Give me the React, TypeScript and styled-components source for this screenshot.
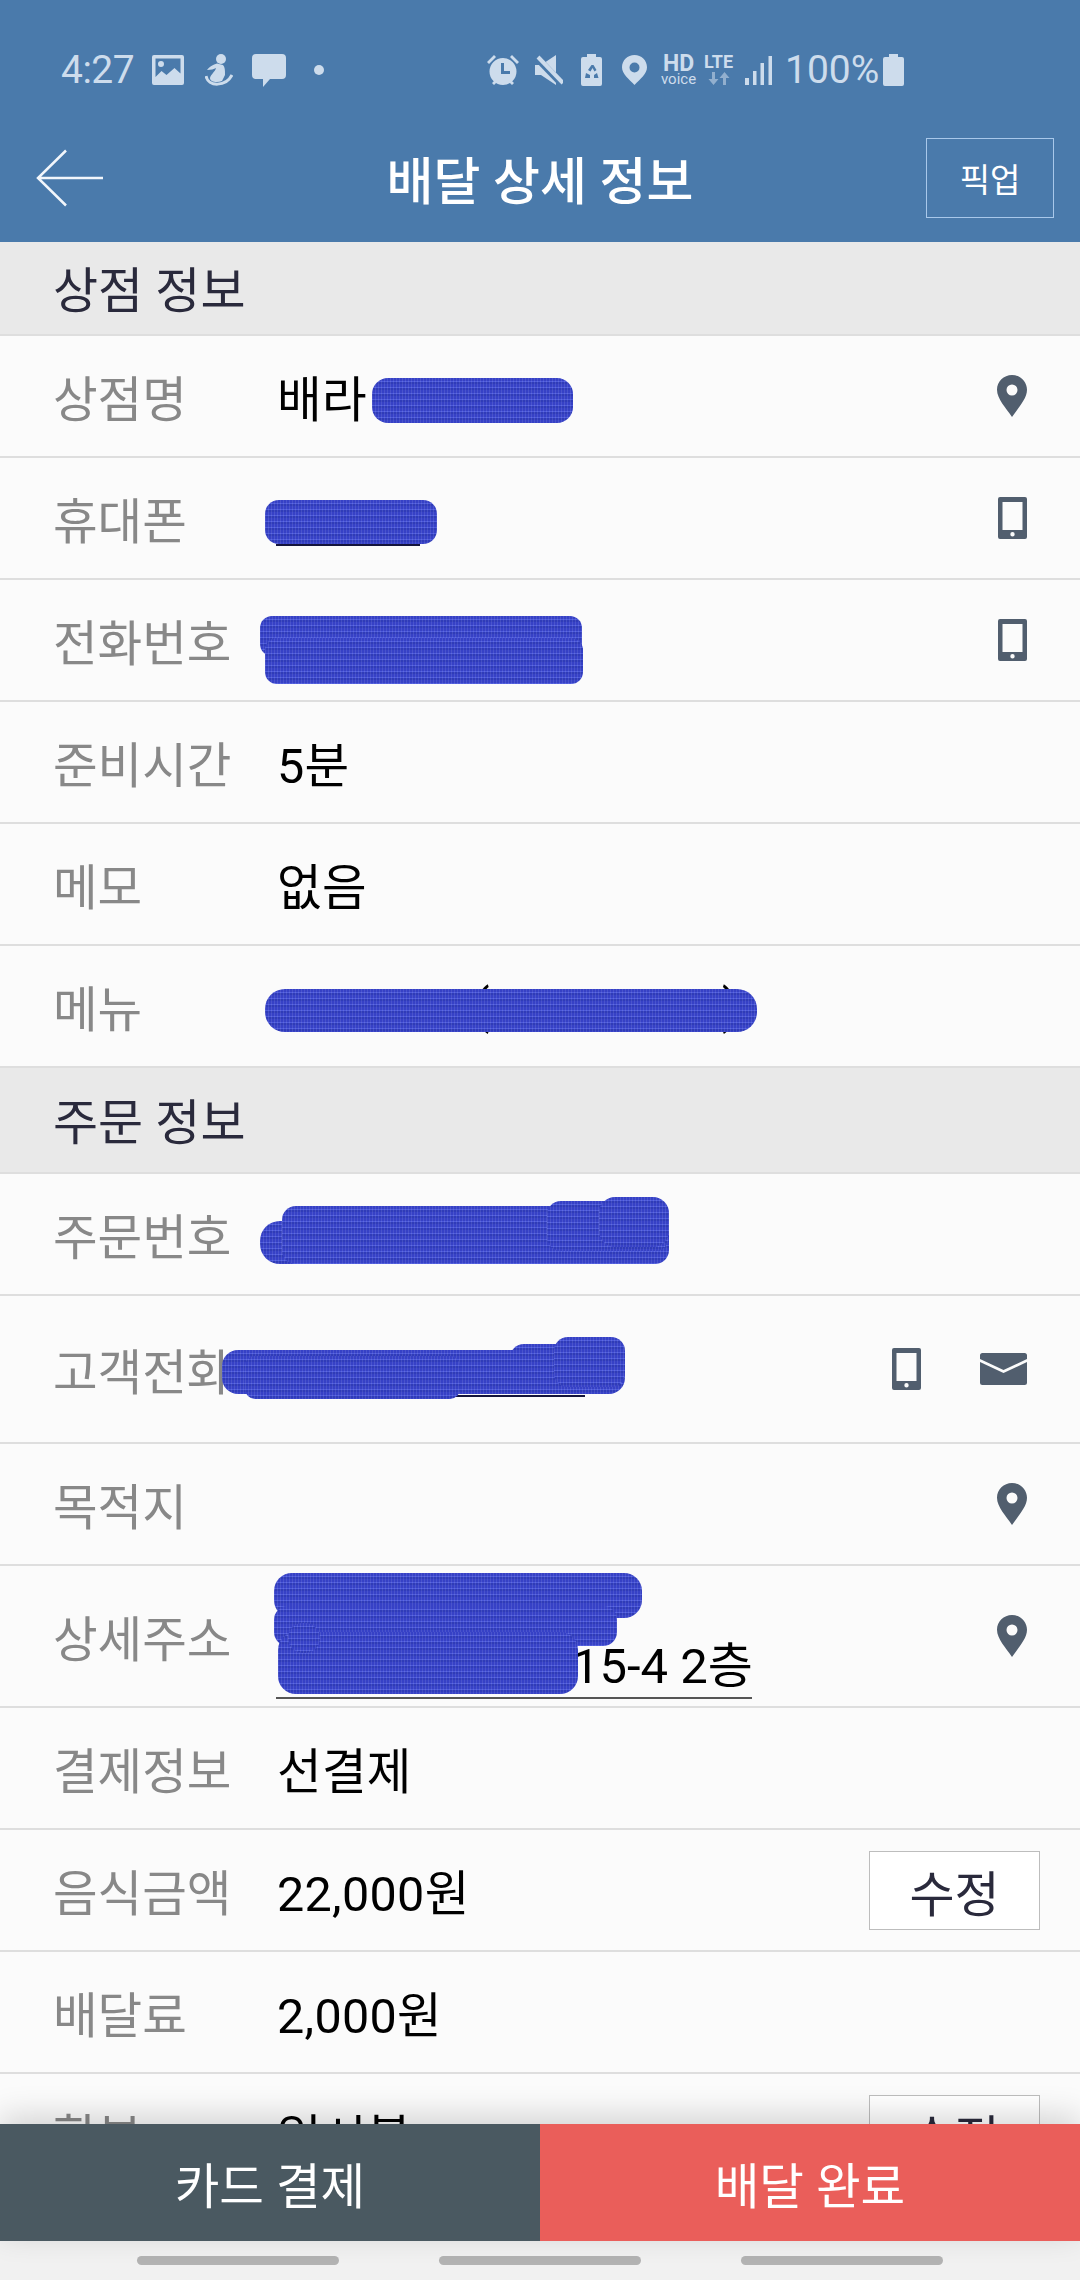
import React from 'react'
import styled, {createGlobalStyle} from 'styled-components'

const Global = createGlobalStyle`
  html, body {
    margin: 0;
    padding: 0;
    width: 1080px;
    height: 2280px;
    overflow: hidden;
    background: #fbfbfb;
    font-family: Roboto, "Noto Sans CJK KR", sans-serif;
  }
`
const Page = styled.div`
  display: flex;
  flex-direction: column;
  width: 1080px;
  height: 2280px;
`
const Header = styled.header`
  flex: 0 0 242px;
  background: #4a7aab;
  display: flex;
  flex-direction: column;
`
const StatusBar = styled.div`
  display: flex;
  align-items: center;
  height: 34px;
  margin: 53px 0 51px;
  padding-left: 61px;
  color: #cddcec;
`
const Clock = styled.span`
  font-size: 39px;
  width: 91px;
  letter-spacing: -.5px;
`
const Glyph = styled.svg<{$ml?: number}>`
  flex: none;
  margin-left: ${p => p.$ml ?? 0}px;
  fill: #cddcec;
`
const ArrowGlyph = styled(Glyph)`
  opacity: .55;
  margin-top: 2px;
`
const NetStack = styled.div<{$ml: number; $w: number}>`
  display: flex;
  flex-direction: column;
  align-items: center;
  flex: none;
  width: ${p => p.$w}px;
  margin-left: ${p => p.$ml}px;
`
const NetBig = styled.span<{$size: number}>`
  font-size: ${p => p.$size}px;
  font-weight: 700;
  line-height: ${p => p.$size * .8}px;
`
const NetSmall = styled.span`
  font-size: 15px;
  line-height: 12px;
`
const Percent = styled.span`
  flex: none;
  margin-left: 13px;
  width: 98px;
  font-size: 39px;
`
const Toolbar = styled.div`
  display: grid;
  grid-template-columns: 1fr auto 1fr;
  align-items: center;
  height: 80px;
  padding: 0 26px;
`
const BackSlot = styled.div`
  display: flex;
  padding-left: 10px;
`
const Title = styled.h1`
  margin: 0;
  font-size: 51px;
  font-weight: 500;
  color: #fff;
`
const PickButton = styled.div`
  justify-self: end;
  box-sizing: border-box;
  width: 128px;
  height: 80px;
  display: flex;
  align-items: center;
  justify-content: center;
  border: 1.5px solid #a9c8ea;
  color: #fff;
  font-size: 33px;
`
const Scroll = styled.main`
  flex: 0 0 1882px;
  overflow: hidden;
`
const SectionHead = styled.div<{$h: number}>`
  box-sizing: border-box;
  height: ${p => p.$h}px;
  display: flex;
  align-items: center;
  padding: 0 0 4px 53px;
  background: #e9e9e9;
  border-bottom: 2px solid #dedede;
  color: #2a2a3c;
  font-size: 49px;
`
const Row = styled.div<{$h?: number}>`
  position: relative;
  box-sizing: border-box;
  height: ${p => p.$h ?? 122}px;
  display: flex;
  align-items: center;
  padding: 0 53px 0 53px;
  border-bottom: 2px solid #dedede;
`
const Label = styled.span`
  flex: 0 0 224px;
  color: #888;
  font-size: 48.500px;
`
const Value = styled.span`
  flex: 1;
  display: flex;
  align-items: center;
  color: #000;
  font-size: 48.500px;
  letter-spacing: .3px;
`
const Paren = styled.span<{$ml: number}>`
  margin-left: ${p => p.$ml}px;
`
const AddressLine = styled.span`
  position: absolute;
  left: 276px;
  top: 71px;
  width: 476px;
  box-sizing: border-box;
  padding-left: 296px;
  border-bottom: 2px solid #555;
  color: #000;
  font-size: 49px;
  line-height: 60px;
  white-space: nowrap;
`
const Actions = styled.div`
  display: flex;
  align-items: center;
  gap: 59px;
`
const EditButton = styled.div`
  box-sizing: border-box;
  width: 171px;
  height: 79px;
  margin-right: -13px;
  display: flex;
  align-items: center;
  justify-content: center;
  background: #fff;
  border: 1.5px solid #bdbdbd;
  color: #2a2a3c;
  font-size: 49px;
`
// 가림 표시: 글자를 덮어 칠한 파란 자국
const Scribble = styled.i<{$x: number; $y: number; $w: number; $h: number; $r?: number}>`
  position: absolute;
  left: ${p => p.$x}px;
  top: ${p => p.$y}px;
  width: ${p => p.$w}px;
  height: ${p => p.$h}px;
  border-radius: ${p => p.$r ?? 16}px;
  background:
    repeating-linear-gradient(90deg, rgba(255, 255, 255, .1) 0 1px, transparent 1px 3px),
    repeating-linear-gradient(180deg, #3641c6 0 3px, #4d5adb 3px 4px, #2f3bb9 4px 6px);
`
const InkEdge = styled.i<{$x: number; $y: number; $w: number}>`
  position: absolute;
  left: ${p => p.$x}px;
  top: ${p => p.$y}px;
  width: ${p => p.$w}px;
  height: 2px;
  background: #14143c;
`
const Footer = styled.footer`
  position: relative;
  flex: 0 0 117px;
  display: grid;
  grid-template-columns: 1fr 1fr;
  box-shadow: 0 -8px 30px rgba(0, 0, 0, .16);
`
const FooterButton = styled.div<{$bg: string}>`
  display: flex;
  align-items: center;
  justify-content: center;
  background: ${p => p.$bg};
  color: #fff;
  font-size: 48.500px;
`
const NavBar = styled.nav`
  flex: 1;
  display: flex;
  justify-content: center;
  gap: 100px;
  padding-top: 15px;
  box-sizing: border-box;
  background: #f1f1f1;
`
const NavPill = styled.span`
  width: 202px;
  height: 9px;
  border-radius: 5px;
  background: #b3b3b3;
`

const PinIcon = () => (
  <svg width="30" height="42" viewBox="0 0 30 42">
    <path fill="#515e6e" fillRule="evenodd"
          d="M15 0C6.700 0 0 6.600 0 14.800 0 24 9 33 15 42c6-9 15-18 15-27.200C30 6.600 23.300 0 15 0zm0 9.500a5.500 5.500 0 1 1 0 11 5.500 5.500 0 0 1 0-11z"/>
  </svg>
)
const PhoneIcon = () => (
  <svg width="29" height="42" viewBox="0 0 29 42">
    <path fill="#515e6e" fillRule="evenodd"
          d="M2 0h25a2 2 0 0 1 2 2v38a2 2 0 0 1-2 2H2a2 2 0 0 1-2-2V2a2 2 0 0 1 2-2zm2.500 5v28h20V5zM14.500 35a2.200 2.200 0 1 0 0 4.400 2.200 2.200 0 0 0 0-4.400z"/>
  </svg>
)
const MailIcon = () => (
  <svg width="47" height="32" viewBox="0 0 47 32">
    <path fill="#515e6e"
          d="M2.500 0h42A2.500 2.500 0 0 1 47 2.500v3.600L23.500 17 0 6.100V2.500A2.500 2.500 0 0 1 2.500 0zM0 9l23.500 11L47 9v20.500a2.500 2.500 0 0 1-2.500 2.500h-42A2.500 2.500 0 0 1 0 29.500z"/>
  </svg>
)
const BackArrow = () => (
  <svg width="68" height="58" viewBox="0 0 68 58">
    <path d="M30 1.500 2 29l28 27.500M2 29h65" fill="none" stroke="#f2f6fb" strokeWidth="2.500"/>
  </svg>
)

const StatusLeft = () => (
  <>
    <Glyph width="32" height="30" viewBox="0 0 32 30">
      <path fillRule="evenodd"
            d="M2 0h28a2 2 0 0 1 2 2v26a2 2 0 0 1-2 2H2a2 2 0 0 1-2-2V2a2 2 0 0 1 2-2zm1.500 3.500V22l6-6 5 4 8-7 6 5.500V3.500zM9 6a3 3 0 1 1 0 6 3 3 0 0 1 0-6z"/>
    </Glyph>
    <Glyph $ml={21} width="28" height="32" viewBox="0 0 28 32">
      <circle cx="16" cy="5" r="5"/>
      <path d="M12 9.500C7 11 4 13 2 16c4 0 7-1 9-2-1 4-5 6-6 10 0 4 7 5 12 3l3-6c0-5 0-8-2-10z"/>
      <path d="M1 22c2 11 20 11 26-1" fill="none" stroke="#cddcec" strokeWidth="3"/>
    </Glyph>
    <Glyph $ml={19} width="34" height="33" viewBox="0 0 34 33">
      <path d="M4 0h26a4 4 0 0 1 4 4v17a4 4 0 0 1-4 4H18l-7 8v-8H4a4 4 0 0 1-4-4V4a4 4 0 0 1 4-4z"/>
    </Glyph>
    <Glyph $ml={28} width="10" height="10" viewBox="0 0 10 10">
      <circle cx="5" cy="5" r="5"/>
    </Glyph>
  </>
)
const StatusRight = () => (
  <>
    <Glyph $ml={163} width="32" height="32" viewBox="0 0 32 32">
      <path d="M0 8 7 1l2 2-7 7zM32 8l-7-7-2 2 7 7zM5 29l3-3 2 2-3 3zM27 29l-3-3-2 2 3 3z"/>
      <path fillRule="evenodd"
            d="M16 4a13.500 13.500 0 1 1 0 27 13.500 13.500 0 0 1 0-27zm-2 5v11h9v-3h-6V9z"/>
    </Glyph>
    <Glyph $ml={16} width="28" height="30" viewBox="0 0 28 30">
      <path d="M0 10h6L21 0v30L6 20H0z"/>
      <path d="M1 2 27 29" stroke="#4a7aab" strokeWidth="7"/>
      <path d="M3 2 28 28" stroke="#cddcec" strokeWidth="4"/>
    </Glyph>
    <Glyph $ml={18} width="21" height="32" viewBox="0 0 21 32">
      <path fillRule="evenodd"
            d="M6 0h9v3h4a2 2 0 0 1 2 2v25a2 2 0 0 1-2 2H2a2 2 0 0 1-2-2V5a2 2 0 0 1 2-2h4zm4.500 11-3.500 5 2.500 1.500 2-3.500 2 3.500 2-1.500-3-5zM5 19l-1 5h5v-3zm11 0-3 2v3h4.500z"/>
    </Glyph>
    <Glyph $ml={20} width="25" height="30" viewBox="0 0 25 30">
      <path fillRule="evenodd"
            d="M12.500 0C5.600 0 0 5.400 0 12.200 0 19 7 24 12.500 30 18 24 25 19 25 12.200 25 5.400 19.400 0 12.500 0zm0 7.500a5 5 0 1 1 0 10 5 5 0 0 1 0-10z"/>
    </Glyph>
    <NetStack $ml={15} $w={33}>
      <NetBig $size={23}>HD</NetBig>
      <NetSmall>voice</NetSmall>
    </NetStack>
    <NetStack $ml={8} $w={31}>
      <NetBig $size={18}>LTE</NetBig>
      <ArrowGlyph width="22" height="13" viewBox="0 0 22 13">
        <path d="M4 0h3v7h3.500L5.500 13 .5 7H4zM15 13h3V6h3.500l-5-6-5 6H15z"/>
      </ArrowGlyph>
    </NetStack>
    <Glyph $ml={11} width="27" height="29" viewBox="0 0 27 29">
      <path d="M0 22h4v7H0zM8 15h3.500v14H8zM15.500 7H19v22h-3.500zM23.500 0H27v29h-3.500z"/>
    </Glyph>
    <Percent>100%</Percent>
    <Glyph width="21" height="32" viewBox="0 0 21 32">
      <path d="M6 0h9v3h4a2 2 0 0 1 2 2v25a2 2 0 0 1-2 2H2a2 2 0 0 1-2-2V5a2 2 0 0 1 2-2h4z"/>
    </Glyph>
  </>
)

const App: React.FC = () => (
  <Page>
    <Global/>
    <Header>
      <StatusBar>
        <Clock>4:27</Clock>
        <StatusLeft/>
        <StatusRight/>
      </StatusBar>
      <Toolbar>
        <BackSlot><BackArrow/></BackSlot>
        <Title>배달 상세 정보</Title>
        <PickButton>픽업</PickButton>
      </Toolbar>
    </Header>
    <Scroll>
      <SectionHead $h={94}>상점 정보</SectionHead>
      <Row>
        <Label>상점명</Label>
        <Value>배라</Value>
        <Scribble $x={372} $y={42} $w={201} $h={45}/>
        <PinIcon/>
      </Row>
      <Row>
        <Label>휴대폰</Label>
        <Value/>
        <InkEdge $x={276} $y={86} $w={144}/>
        <Scribble $x={265} $y={42} $w={172} $h={44} $r={14}/>
        <PhoneIcon/>
      </Row>
      <Row>
        <Label>전화번호</Label>
        <Value/>
        <Scribble $x={260} $y={36} $w={322} $h={40} $r={12}/>
        <Scribble $x={265} $y={58} $w={318} $h={46} $r={12}/>
        <PhoneIcon/>
      </Row>
      <Row>
        <Label>준비시간</Label>
        <Value>5분</Value>
      </Row>
      <Row>
        <Label>메모</Label>
        <Value>없음</Value>
      </Row>
      <Row>
        <Label>메뉴</Label>
        <Value>
          <Paren $ml={196}>(</Paren>
          <Paren $ml={232}>)</Paren>
        </Value>
        <Scribble $x={265} $y={43} $w={492} $h={43} $r={20}/>
      </Row>
      <SectionHead $h={106}>주문 정보</SectionHead>
      <Row>
        <Label>주문번호</Label>
        <Value/>
        <Scribble $x={260} $y={47} $w={300} $h={43} $r={20}/>
        <Scribble $x={282} $y={32} $w={387} $h={58} $r={14}/>
        <Scribble $x={547} $y={27} $w={122} $h={50} $r={14}/>
        <Scribble $x={599} $y={23} $w={70} $h={50} $r={16}/>
      </Row>
      <Row $h={148}>
        <Label>고객전화</Label>
        <Value/>
        <InkEdge $x={455} $y={99} $w={130}/>
        <Scribble $x={222} $y={54} $w={403} $h={44} $r={16}/>
        <Scribble $x={245} $y={60} $w={215} $h={43} $r={10}/>
        <Scribble $x={510} $y={48} $w={115} $h={40} $r={14}/>
        <Scribble $x={554} $y={41} $w={71} $h={50} $r={14}/>
        <Actions>
          <PhoneIcon/>
          <MailIcon/>
        </Actions>
      </Row>
      <Row>
        <Label>목적지</Label>
        <Value/>
        <PinIcon/>
      </Row>
      <Row $h={142}>
        <Label>상세주소</Label>
        <Value/>
        <AddressLine>15-4 2층</AddressLine>
        <Scribble $x={274} $y={7} $w={368} $h={45} $r={18}/>
        <Scribble $x={274} $y={40} $w={343} $h={40} $r={14}/>
        <Scribble $x={278} $y={66} $w={300} $h={62} $r={18}/>
        <Scribble $x={288} $y={57} $w={32} $h={30} $r={15}/>
        <PinIcon/>
      </Row>
      <Row>
        <Label>결제정보</Label>
        <Value>선결제</Value>
      </Row>
      <Row>
        <Label>음식금액</Label>
        <Value>22,000원</Value>
        <EditButton>수정</EditButton>
      </Row>
      <Row>
        <Label>배달료</Label>
        <Value>2,000원</Value>
      </Row>
      <Row>
        <Label>할부</Label>
        <Value>일시불</Value>
        <EditButton>수정</EditButton>
      </Row>
    </Scroll>
    <Footer>
      <FooterButton $bg="#4a5961">카드 결제</FooterButton>
      <FooterButton $bg="#ea5e5a">배달 완료</FooterButton>
    </Footer>
    <NavBar>
      <NavPill/>
      <NavPill/>
      <NavPill/>
    </NavBar>
  </Page>
)

export default App
